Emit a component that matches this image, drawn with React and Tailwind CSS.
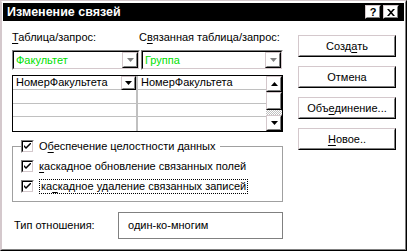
import React from 'react'

// ─── Win9x bits ──────────────────────────────────────────────────────────────

function Raised({ className = '', children }) {
  return (
    <div className={`border border-t-[#d4c8cc] border-l-[#d4c8cc] border-r-black border-b-black ${className}`}>
      <div className="w-full h-full border border-t-white border-l-white border-r-[#808080] border-b-[#808080] flex items-center justify-center bg-white">
        {children}
      </div>
    </div>
  )
}

function Sunken({ className = '', inner = '', children }) {
  return (
    <div className={`border border-t-[#808080] border-l-[#808080] border-r-white border-b-white ${className}`}>
      <div className={`w-full h-full border border-t-black border-l-black border-r-[#d4c8cc] border-b-[#d4c8cc] bg-white ${inner}`}>
        {children}
      </div>
    </div>
  )
}

function Arrow({ up = false, color = '#000' }) {
  return (
    <svg width="7" height="4" viewBox="0 0 7 4">
      <polygon points={up ? '3.5,0 7,4 0,4' : '0,0 7,0 3.5,4'} fill={color} />
    </svg>
  )
}

function Check() {
  return (
    <Sunken className="w-[13px] h-[13px] shrink-0" inner="flex items-center justify-center">
      <svg width="7" height="7" viewBox="0 0 7 7">
        <path d="M0 2 L0 4 L2 6 L7 1 L7 -1 L2 4 Z" fill="#000" />
      </svg>
    </Sunken>
  )
}

function Btn({ children }) {
  return (
    <Raised className="w-[98px] h-[22px]">
      <span className="leading-none">{children}</span>
    </Raised>
  )
}

const U = ({ children }) => <span className="underline underline-offset-2">{children}</span>

// ─── Dialog ──────────────────────────────────────────────────────────────────

export default function App() {
  return (
    <div className="w-[407px] h-[251px] bg-white text-black text-[11px] leading-[13px] font-['Liberation_Sans',Arial,sans-serif]">
      <div className="w-full h-full border border-t-[#d4c8cc] border-l-[#d4c8cc] border-r-black border-b-black">
        <div className="w-full h-full border border-t-white border-l-[#d4c8cc] border-r-[#808080] border-b-[#808080] p-px flex flex-col">

          {/* ── Title bar ─────────────────────────────────────────────── */}
          <div className="h-[18px] bg-black flex items-center pl-1 pr-[5px] shrink-0">
            <span className="text-white font-bold text-[12.5px]">Изменение связей</span>
            <div className="ml-auto flex gap-[2px]">
              <Raised className="w-4 h-[14px]">
                <span className="font-bold text-[11px] leading-none">?</span>
              </Raised>
              <Raised className="w-4 h-[14px]">
                <svg width="8" height="7" viewBox="0 0 8 7">
                  <path d="M0 0 L2 0 L4 2.3 L6 0 L8 0 L5 3.5 L8 7 L6 7 L4 4.7 L2 7 L0 7 L3 3.5 Z" fill="#000" />
                </svg>
              </Raised>
            </div>
          </div>

          {/* ── Body ──────────────────────────────────────────────────── */}
          <div className="flex pl-[9px] pt-[10px] gap-[15px]">

            {/* left column */}
            <div className="w-[271px] flex flex-col">
              <div className="flex h-[13px]">
                <span className="w-[127px]"><U>Т</U>аблица/запрос:</span>
                <span>С<U>в</U>язанная таблица/запрос:</span>
              </div>

              <div className="flex gap-px mt-[6px]">
                <Sunken className="w-[128px] h-[20px]" inner="flex items-center">
                  <span className="pl-[2px] text-[#00e000]">Факультет</span>
                  <Raised className="ml-auto w-4 h-4">
                    <Arrow color="#808080" />
                  </Raised>
                </Sunken>
                <Sunken className="w-[142px] h-[20px]" inner="flex items-center">
                  <span className="pl-[2px] text-[#00e000]">Группа</span>
                  <Raised className="ml-auto w-4 h-4">
                    <Arrow color="#808080" />
                  </Raised>
                </Sunken>
              </div>

              {/* grid */}
              <div className="mt-[5px] h-[57px] border border-black flex">
                <div className="flex-1 flex flex-col">
                  {[0, 1, 2, 3].map(i => (
                    <div key={i} className={`flex h-[14px] ${i < 3 ? 'border-b border-[#c0c0c0]' : ''}`}>
                      <div className="w-[125px] flex items-center border-r-2 border-[#c0c0c0]">
                        {i === 0 && (
                          <>
                            <span className="pl-[3px]">НомерФакультета</span>
                            <Raised className="ml-auto w-[15px] h-[14px]">
                              <Arrow />
                            </Raised>
                          </>
                        )}
                      </div>
                      <div className="flex-1 flex items-center">
                        {i === 0 && <span className="pl-[3px]">НомерФакультета</span>}
                      </div>
                    </div>
                  ))}
                </div>
                <div className="w-4 flex flex-col">
                  <Raised className="w-4 h-4"><Arrow up /></Raised>
                  <Raised className="w-4 h-[18px]" />
                  <div className="h-[5px] bg-[repeating-conic-gradient(#c0c0c0_0_25%,#fff_0_50%)] bg-[length:2px_2px]" />
                  <Raised className="w-4 h-4"><Arrow /></Raised>
                </div>
              </div>

              {/* group */}
              <fieldset className="mt-[8px] h-[62px] border border-[#a0a0a0] pl-2 flex flex-col">
                <legend className="flex items-center gap-[5px] pr-[5px]">
                  <Check />
                  <span>О<U>б</U>еспечение целостности данных</span>
                </legend>
                <div className="flex items-center gap-[5px] mt-[7px]">
                  <Check />
                  <span><U>к</U>аскадное обновление связанных полей</span>
                </div>
                <div className="flex items-center gap-[5px] mt-[6px]">
                  <Check />
                  <span className="border border-dotted border-black px-px">ка<U>с</U>кадное удаление связанных записей</span>
                </div>
              </fieldset>

              <div className="flex items-center mt-[10px]">
                <span className="w-[106px] pl-[2px]">Тип отношения:</span>
                <div className="w-[165px] h-[27px] border border-[#808080] flex items-center">
                  <span className="pl-[9px]">один-ко-многим</span>
                </div>
              </div>
            </div>

            {/* right column */}
            <div className="flex flex-col gap-[9px] pt-[4px]">
              <Btn>Созд<U>а</U>ть</Btn>
              <Btn>Отмена</Btn>
              <Btn>Объ<U>е</U>динение...</Btn>
              <Btn><U>Н</U>овое..</Btn>
            </div>
          </div>
        </div>
      </div>
    </div>
  )
}
